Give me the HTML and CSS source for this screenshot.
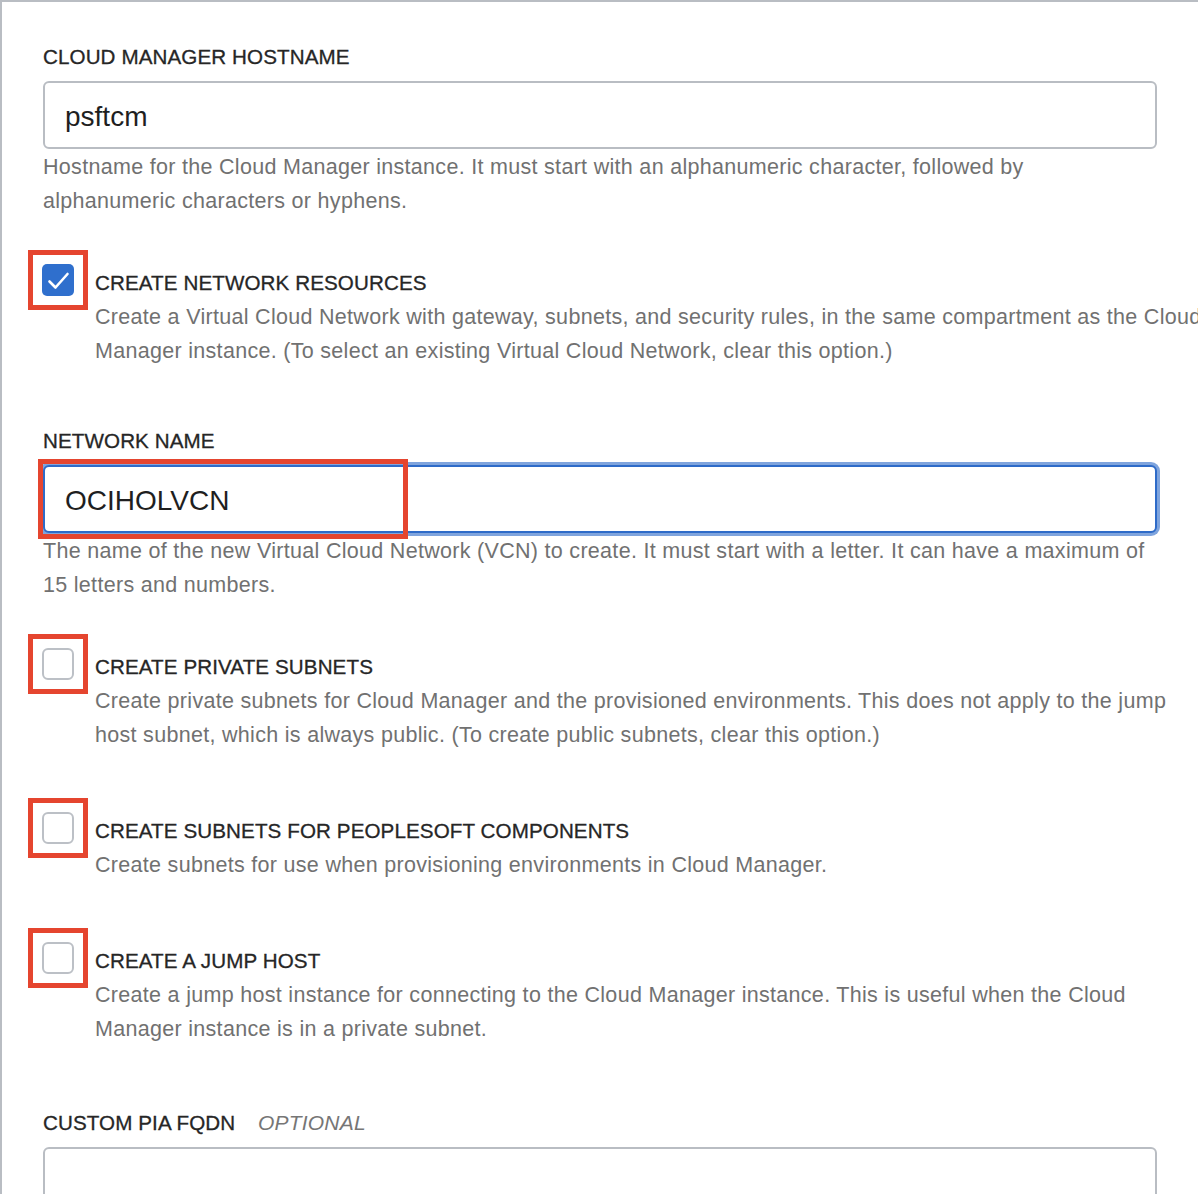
FILE: index.html
```html
<!DOCTYPE html>
<html lang="en">
<head>
<meta charset="utf-8">
<title>Cloud Manager Stack</title>
<link rel="stylesheet" href="styles.css">
</head>
<body>
<main class="panel">
  <section class="field">
    <label class="label" for="host">CLOUD MANAGER HOSTNAME</label>
    <input class="input" id="host" type="text" value="psftcm">
    <p class="help">Hostname for the Cloud Manager instance. It must start with an alphanumeric character, followed by<br>alphanumeric characters or hyphens.</p>
  </section>

  <section class="check-field gap-sm">
    <span class="mark">
      <span class="box checked">
        <svg viewBox="0 0 32 32" width="32" height="32" aria-hidden="true"><polyline points="7.5,17.5 13.5,23.5 25.5,10" fill="none" stroke="#fff" stroke-width="2.6" stroke-linecap="round" stroke-linejoin="round"/></svg>
      </span>
    </span>
    <div class="check-text">
      <div class="label">CREATE NETWORK RESOURCES</div>
      <p class="help nowrap">Create a Virtual Cloud Network with gateway, subnets, and security rules, in the same compartment as the Cloud<br>Manager instance. (To select an existing Virtual Cloud Network, clear this option.)</p>
    </div>
  </section>

  <section class="field gap-md">
    <label class="label" for="vcn">NETWORK NAME</label>
    <div class="input-wrap">
      <input class="input focused" id="vcn" type="text" value="OCIHOLVCN">
      <span class="callout"></span>
    </div>
    <p class="help">The name of the new Virtual Cloud Network (VCN) to create. It must start with a letter. It can have a maximum of<br>15 letters and numbers.</p>
  </section>

  <section class="check-field gap-sm">
    <span class="mark"><span class="box"></span></span>
    <div class="check-text">
      <div class="label">CREATE PRIVATE SUBNETS</div>
      <p class="help nowrap">Create private subnets for Cloud Manager and the provisioned environments. This does not apply to the jump<br>host subnet, which is always public. (To create public subnets, clear this option.)</p>
    </div>
  </section>

  <section class="check-field gap-lg">
    <span class="mark"><span class="box"></span></span>
    <div class="check-text">
      <div class="label">CREATE SUBNETS FOR PEOPLESOFT COMPONENTS</div>
      <p class="help nowrap">Create subnets for use when provisioning environments in Cloud Manager.</p>
    </div>
  </section>

  <section class="check-field gap-lg">
    <span class="mark"><span class="box"></span></span>
    <div class="check-text">
      <div class="label">CREATE A JUMP HOST</div>
      <p class="help nowrap">Create a jump host instance for connecting to the Cloud Manager instance. This is useful when the Cloud<br>Manager instance is in a private subnet.</p>
    </div>
  </section>

  <section class="field gap-xl">
    <label class="label" for="fqdn">CUSTOM PIA FQDN <span class="optional">OPTIONAL</span></label>
    <input class="input" id="fqdn" type="text" value="">
  </section>
</main>
</body>
</html>
```

FILE: styles.css
```css
html, body {
  margin: 0;
  padding: 0;
  overflow: hidden;
  background: #ffffff;
}

body {
  font-family: "Liberation Sans", Arial, Helvetica, sans-serif;
  color: #2a2a2a;
}

.panel {
  border-top: 2px solid #b9bdc3;
  border-left: 2px solid #b9bdc3;
  padding: 38px 41px 60px 41px;
  min-height: 1300px;
}

.field {
  display: block;
}

.gap-sm { margin-top: 48px; }
.gap-md { margin-top: 56px; }
.gap-lg { margin-top: 62px; }
.gap-xl { margin-top: 60px; }

.label {
  display: block;
  font-size: 20.6px;
  line-height: 34px;
  letter-spacing: 0.1px;
  color: #262626;
  -webkit-text-stroke: 0.3px #262626;
}

.optional {
  margin-left: 17px;
  font-style: italic;
  font-size: 21px;
  color: #767676;
  -webkit-text-stroke: 0;
  letter-spacing: 0.2px;
}

.input {
  display: block;
  box-sizing: border-box;
  width: 100%;
  height: 68px;
  margin: 0;
  padding: 3px 20px 0 20px;
  border: 2px solid #b9bdc3;
  border-radius: 6px;
  background: #ffffff;
  font-family: "Liberation Sans", Arial, Helvetica, sans-serif;
  font-size: 28px;
  color: #1f1f1f;
  outline: none;
}

.label + .input,
.input-wrap {
  margin-top: 7px;
}

.input.focused {
  border-color: #2e6bc8;
  box-shadow: 0 0 0 3px #7fa4dd;
}

.input-wrap {
  position: relative;
}

.callout {
  position: absolute;
  left: -5px;
  top: -6px;
  width: 370px;
  height: 80px;
  box-sizing: border-box;
  border: 5px solid #e5452f;
  pointer-events: none;
}

.help {
  margin: 1px 0 0 0;
  font-size: 21.5px;
  line-height: 34px;
  letter-spacing: 0.3px;
  color: #717171;
}

.nowrap {
  white-space: nowrap;
}

.check-field {
  display: flex;
  align-items: flex-start;
  gap: 7px;
}

.check-field .help {
  margin-top: 0;
}

.mark {
  flex: 0 0 auto;
  box-sizing: border-box;
  width: 60px;
  height: 60px;
  margin: -16px 0 0 -15px;
  padding: 9px;
  border: 5px solid #e5452f;
}

.box {
  box-sizing: border-box;
  width: 32px;
  height: 32px;
  border: 2px solid #bcc0c6;
  border-radius: 6px;
  background: #ffffff;
  display: flex;
  align-items: center;
  justify-content: center;
}

.box svg {
  display: block;
}

.box.checked {
  border: none;
  border-radius: 5px;
  background: #2f6fcd;
}

.check-text {
  min-width: 0;
}
```
